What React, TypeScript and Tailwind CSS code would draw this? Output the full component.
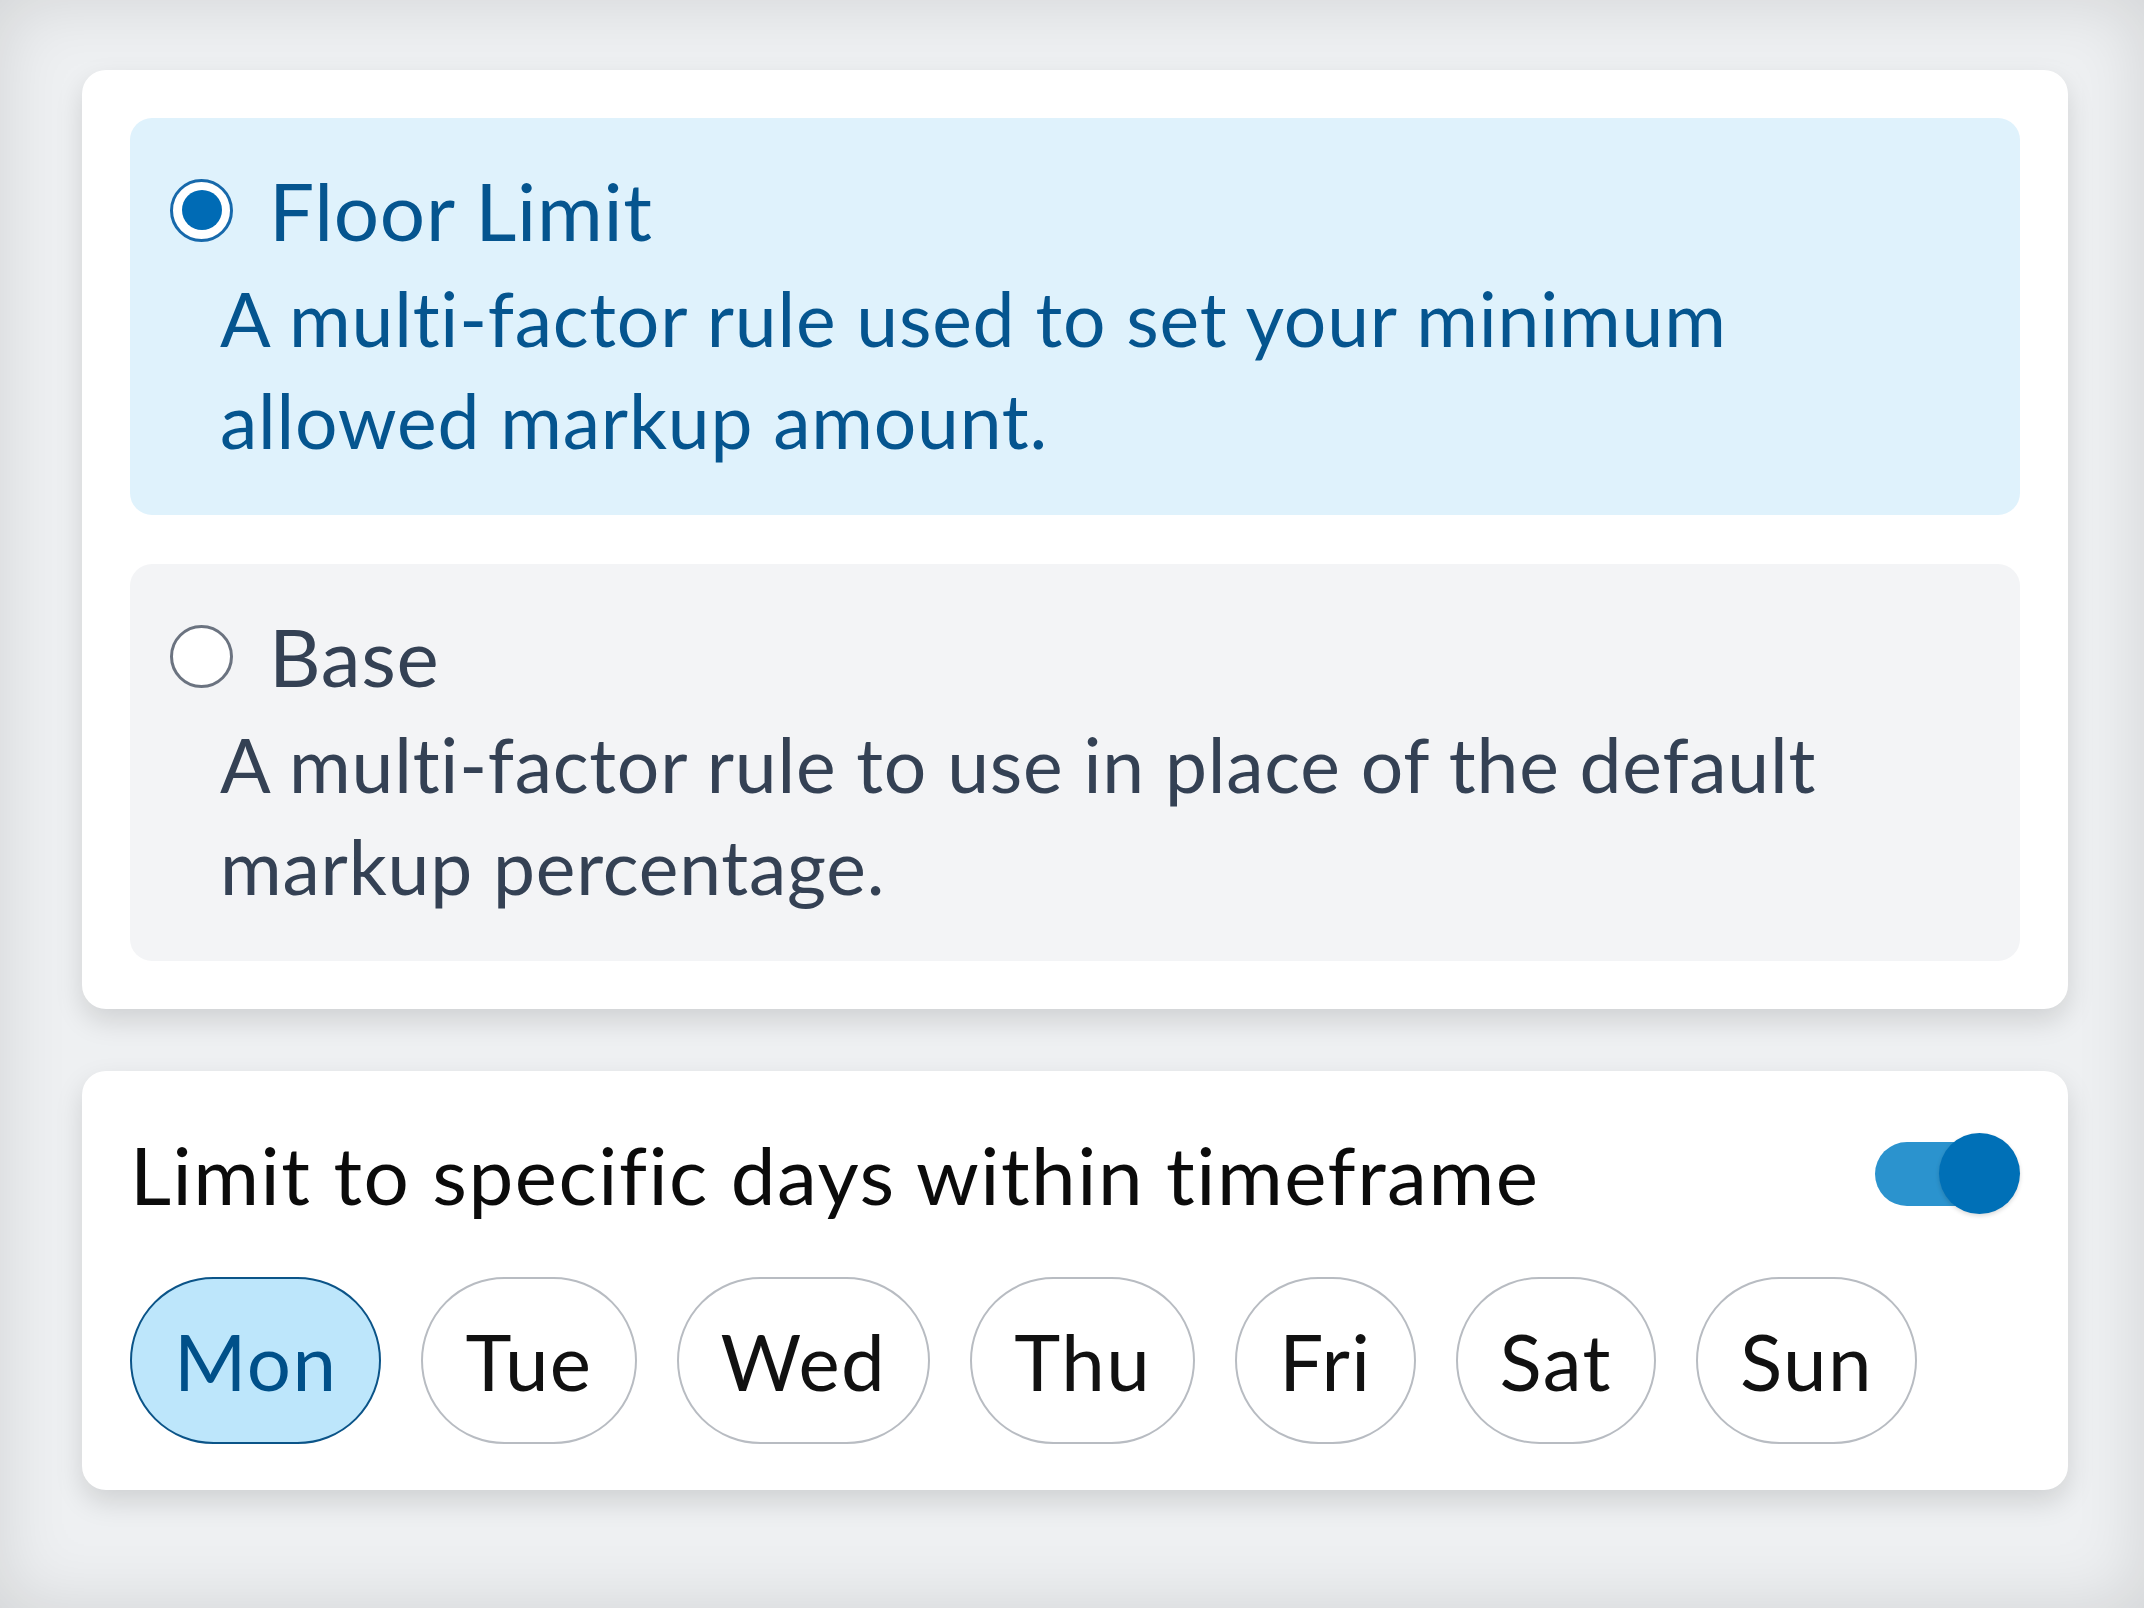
import { useState } from "react";

const days = ["Mon", "Tue", "Wed", "Thu", "Fri", "Sat", "Sun"];

function Radio({ checked }: { checked: boolean }) {
  if (checked) {
    return (
      <span className="flex h-[63px] w-[63px] shrink-0 items-center justify-center rounded-full border-[3px] border-[#1769ab] bg-white">
        <span className="h-[40px] w-[40px] rounded-full bg-[#006bb5]" />
      </span>
    );
  }
  return <span className="h-[63px] w-[63px] shrink-0 rounded-full border-[3px] border-[#6b7380] bg-white" />;
}

function RuleOption({
  title,
  description,
  selected,
  onSelect,
}: {
  title: string;
  description: string;
  selected: boolean;
  onSelect: () => void;
}) {
  return (
    <button
      type="button"
      onClick={onSelect}
      className={
        selected
          ? "block w-full rounded-[22px] bg-[#dff2fc] pt-[52px] pb-[44px] pl-[40px] pr-[40px] text-left text-[#05558f]"
          : "block w-full rounded-[22px] bg-[#f3f4f6] pt-[52px] pb-[44px] pl-[40px] pr-[40px] text-left text-[#344154]"
      }
    >
      <div className="flex items-center gap-[36px]">
        <Radio checked={selected} />
        <span className="text-[80px] leading-[80px] tracking-[0.7px]">{title}</span>
      </div>
      <p className="mt-[17px] max-w-[1680px] pl-[50px] text-[75px] leading-[102px] tracking-[0.8px]">{description}</p>
    </button>
  );
}

function Toggle({ on, onChange }: { on: boolean; onChange: () => void }) {
  return (
    <button type="button" onClick={onChange} className="relative h-[81px] w-[145px] shrink-0">
      <span
        className={
          on
            ? "absolute left-0 top-[9px] h-[64px] w-[120px] rounded-full bg-[#2b93ce]"
            : "absolute left-0 top-[9px] h-[64px] w-[120px] rounded-full bg-[#cbd5e1]"
        }
      />
      <span
        className={
          on
            ? "absolute right-0 top-0 h-[81px] w-[81px] rounded-full bg-[#0070b7] shadow-[0_2px_4px_rgba(0,0,0,0.15)]"
            : "absolute left-0 top-0 h-[81px] w-[81px] rounded-full bg-white shadow-[0_2px_4px_rgba(0,0,0,0.2)]"
        }
      />
    </button>
  );
}

export default function App() {
  const [rule, setRule] = useState<"floor" | "base">("floor");
  const [limitDays, setLimitDays] = useState(true);
  const [selectedDays, setSelectedDays] = useState<string[]>(["Mon"]);

  const toggleDay = (d: string) =>
    setSelectedDays((prev) => (prev.includes(d) ? prev.filter((x) => x !== d) : [...prev, d]));

  return (
    <div
      className="h-[1608px] w-full overflow-hidden bg-[#eef0f2] pt-[70px] pl-[82px] shadow-[inset_0_0_70px_rgba(0,0,0,0.12)] [font-variant-ligatures:none]"
      style={{ fontFamily: "Lato, 'Noto Sans', sans-serif" }}
    >
      <div className="flex w-[1986px] flex-col gap-[62px]">
        <div className="flex flex-col gap-[49px] rounded-[24px] bg-white p-[48px] shadow-[0_12px_28px_rgba(0,0,0,0.13)]">
          <RuleOption
            title="Floor Limit"
            description="A multi-factor rule used to set your minimum allowed markup amount."
            selected={rule === "floor"}
            onSelect={() => setRule("floor")}
          />
          <RuleOption
            title="Base"
            description="A multi-factor rule to use in place of the default markup percentage."
            selected={rule === "base"}
            onSelect={() => setRule("base")}
          />
        </div>

        <div className="rounded-[24px] bg-white pt-[62px] pb-[46px] pl-[48px] pr-[48px] shadow-[0_12px_28px_rgba(0,0,0,0.13)]">
          <div className="flex items-center justify-between">
            <span className="text-[80px] leading-[80px] tracking-[1.5px] text-[#0b0b0b]">
              Limit to specific days within timeframe
            </span>
            <Toggle on={limitDays} onChange={() => setLimitDays((v) => !v)} />
          </div>
          <div className="mt-[63px] flex gap-[40px]">
            {days.map((d) => {
              const active = selectedDays.includes(d);
              return (
                <button
                  key={d}
                  type="button"
                  onClick={() => toggleDay(d)}
                  className={
                    active
                      ? "flex h-[167px] items-center rounded-full border-2 border-[#0b5488] bg-[#bde6fb] px-[42px] text-[78px] leading-[80px] tracking-[1.5px] text-[#005089]"
                      : "flex h-[167px] items-center rounded-full border-2 border-[#b8bcc2] bg-white px-[42px] text-[78px] leading-[80px] tracking-[1.5px] text-[#111111]"
                  }
                >
                  {d}
                </button>
              );
            })}
          </div>
        </div>
      </div>
    </div>
  );
}
